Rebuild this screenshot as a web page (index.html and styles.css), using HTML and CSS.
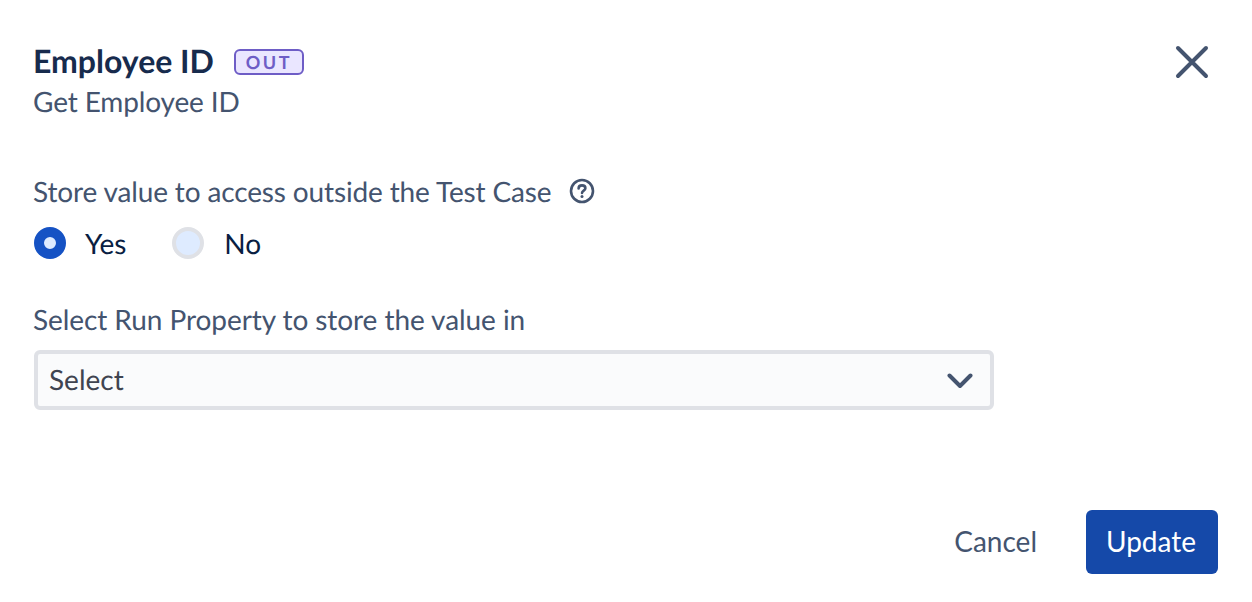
FILE: index.html
```html
<!DOCTYPE html>
<html lang="en">
<head>
<meta charset="utf-8">
<title>Employee ID</title>
<link rel="stylesheet" href="styles.css">
</head>
<body>
<div class="dialog">
  <header class="head">
    <div class="head-text">
      <div class="title-row">
        <h1 class="title">Employee ID</h1>
        <span class="badge">OUT</span>
      </div>
      <p class="subtitle">Get Employee ID</p>
    </div>
    <button class="close" aria-label="Close">
      <svg width="34" height="34" viewBox="0 0 34 34"><path d="M3 3 L31 31 M31 3 L3 31" fill="none" stroke="#44546f" stroke-width="4" stroke-linecap="round"/></svg>
    </button>
  </header>
  <section class="store">
    <div class="label-row">
      <span class="label label-store">Store value to access outside the Test Case</span>
      <svg class="help" width="26" height="26" viewBox="0 0 26 26">
        <circle cx="13" cy="13" r="11" fill="none" stroke="#44546f" stroke-width="2.6"/>
        <path d="M9.6 10.4 C9.6 8.4 11.2 7.4 13 7.4 C15 7.4 16.4 8.6 16.4 10.2 C16.4 12.6 13 12.6 13 15" fill="none" stroke="#44546f" stroke-width="2.6" stroke-linecap="round"/>
        <circle cx="13" cy="18.6" r="1.5" fill="#44546f"/>
      </svg>
    </div>
    <div class="radios">
      <label class="radio"><span class="dot dot-on"></span><span>Yes</span></label>
      <label class="radio"><span class="dot dot-off"></span><span>No</span></label>
    </div>
  </section>
  <section class="prop">
    <div class="label label-prop">Select Run Property to store the value in</div>
    <div class="select">
      <span class="select-value">Select</span>
      <svg width="26" height="16" viewBox="0 0 26 16"><path d="M2.5 2.5 L13 13 L23.5 2.5" fill="none" stroke="#44546f" stroke-width="4" stroke-linecap="round" stroke-linejoin="round"/></svg>
    </div>
  </section>
  <footer class="foot">
    <button class="cancel">Cancel</button>
    <button class="update">Update</button>
  </footer>
</div>
</body>
</html>
```
FILE: styles.css
```css
* { box-sizing: border-box; }
html, body { margin: 0; padding: 0; background: #fff; }
body { width: 1252px; height: 602px; overflow: hidden; font-family: Lato, "Liberation Sans", sans-serif; color: #44546f; text-rendering: geometricPrecision; }
.dialog { padding: 40px 34px 28px 33px; height: 602px; display: flex; flex-direction: column; }
.head { display: flex; justify-content: space-between; align-items: flex-start; }
.title-row { display: flex; align-items: center; gap: 20px; height: 42px; }
.title { margin: 0; font-size: 32px; font-weight: 700; color: #172b4d; line-height: 42px; }
.badge { width: 70px; height: 26px; border: 2px solid #6e5dc6; border-radius: 6px; background: #eae6ff; color: #6e5dc6; font-size: 18px; font-weight: 700; letter-spacing: 2.6px; line-height: 22px; text-align: center; margin-top: 1px; }
.subtitle { margin: -1px 0 0; font-size: 28px; line-height: 40px; letter-spacing: -0.13px; }
.close { border: 0; background: none; padding: 0; margin: 5px 9px 0 0; width: 34px; height: 34px; }
.close svg { display: block; }
.store { margin-top: 49px; }
.label-row { display: flex; align-items: center; gap: 18px; height: 42px; }
.label { font-size: 28px; line-height: 42px; }
.label-store { letter-spacing: -0.14px; }
.label-prop { letter-spacing: -0.07px; }
.help { display: block; flex: none; }
.radios { display: flex; gap: 46px; margin-top: 15px; height: 32px; }
.radio { display: flex; align-items: center; gap: 19px; font-size: 28px; color: #091e42; }
.dot { width: 32px; height: 32px; border-radius: 50%; display: block; }
.dot-on { background: #deebff; border: 10px solid #1552c4; margin-left: 1px; }
.dot-off { background: #deebff; border: 4px solid #dfe1e6; margin-right: 1px; }
.prop { margin-top: 39px; }
.select { width: 960px; height: 60px; margin: 10px 0 0 1px; border: 4px solid #dfe1e6; border-radius: 6px; background: #fafbfc; display: flex; align-items: center; justify-content: space-between; padding: 0 17px 0 11px; font-size: 28px; color: #3f4450; }
.select-value { padding-bottom: 2px; }
.select svg { display: block; margin-top: 2px; }
.foot { margin-top: auto; display: flex; justify-content: flex-end; align-items: center; gap: 49px; }
.cancel { border: 0; background: none; padding: 0 0 2px; font: inherit; font-size: 28px; color: #44546f; }
.update { border: 0; padding: 0 2px 2px 0; width: 132px; height: 64px; border-radius: 6px; background: #1549a9; color: #fff; font: inherit; font-size: 28px; }
```
